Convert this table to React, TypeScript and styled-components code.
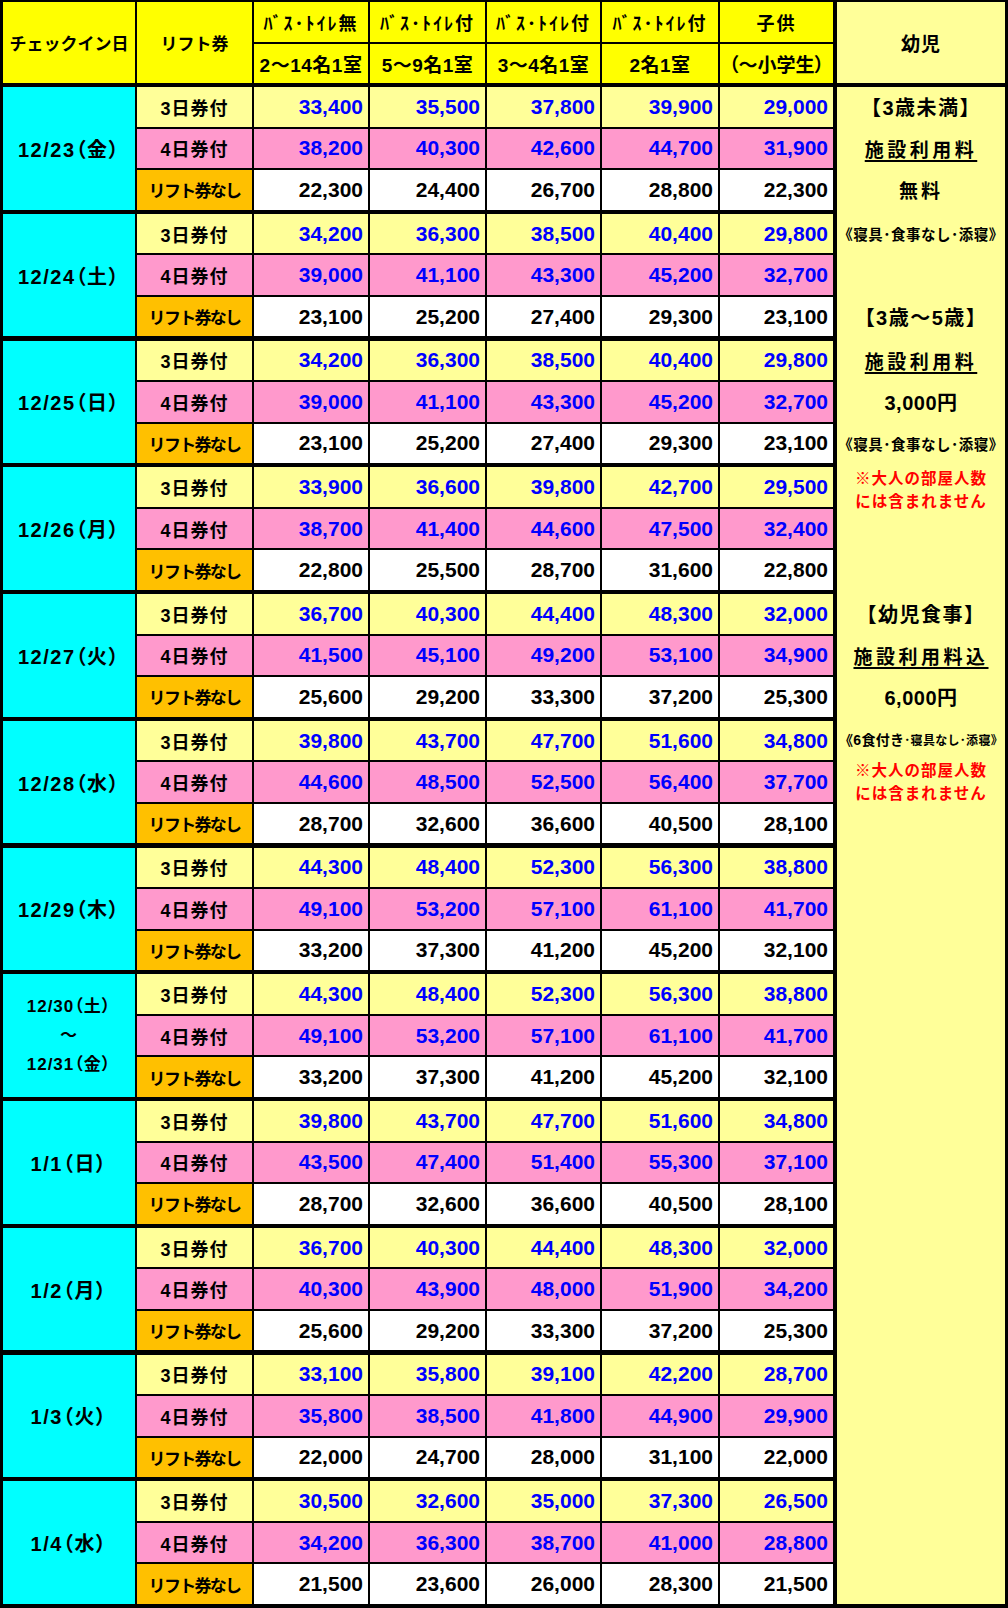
import React from "react";
import styled, { createGlobalStyle, css } from "styled-components";

const GlobalStyle = createGlobalStyle`
  html, body {
    margin: 0;
    padding: 0;
    background: #ffffff;
  }
  body {
    font-family: "Liberation Sans", "Noto Sans CJK JP", sans-serif;
  }
`;

type Kind = "three" | "four" | "none";

const COLUMNS = "132px 115px 114px 115px 113px 116px 113px";

const rowBg: Record<Kind, string> = {
  three: "#ffff99",
  four: "#ff99cc",
  none: "#ffffff",
};

const liftBg: Record<Kind, string> = {
  three: "#ffff99",
  four: "#ff99cc",
  none: "#ffc000",
};

const liftLabel: Record<Kind, string> = {
  three: "3日券付",
  four: "4日券付",
  none: "リフト券なし",
};

interface Stay {
  date: string[];
  three: string[];
  four: string[];
  none: string[];
}

const stays: Stay[] = [
  {
    date: ["12/23（金）"],
    three: ["33,400", "35,500", "37,800", "39,900", "29,000"],
    four: ["38,200", "40,300", "42,600", "44,700", "31,900"],
    none: ["22,300", "24,400", "26,700", "28,800", "22,300"],
  },
  {
    date: ["12/24（土）"],
    three: ["34,200", "36,300", "38,500", "40,400", "29,800"],
    four: ["39,000", "41,100", "43,300", "45,200", "32,700"],
    none: ["23,100", "25,200", "27,400", "29,300", "23,100"],
  },
  {
    date: ["12/25（日）"],
    three: ["34,200", "36,300", "38,500", "40,400", "29,800"],
    four: ["39,000", "41,100", "43,300", "45,200", "32,700"],
    none: ["23,100", "25,200", "27,400", "29,300", "23,100"],
  },
  {
    date: ["12/26（月）"],
    three: ["33,900", "36,600", "39,800", "42,700", "29,500"],
    four: ["38,700", "41,400", "44,600", "47,500", "32,400"],
    none: ["22,800", "25,500", "28,700", "31,600", "22,800"],
  },
  {
    date: ["12/27（火）"],
    three: ["36,700", "40,300", "44,400", "48,300", "32,000"],
    four: ["41,500", "45,100", "49,200", "53,100", "34,900"],
    none: ["25,600", "29,200", "33,300", "37,200", "25,300"],
  },
  {
    date: ["12/28（水）"],
    three: ["39,800", "43,700", "47,700", "51,600", "34,800"],
    four: ["44,600", "48,500", "52,500", "56,400", "37,700"],
    none: ["28,700", "32,600", "36,600", "40,500", "28,100"],
  },
  {
    date: ["12/29（木）"],
    three: ["44,300", "48,400", "52,300", "56,300", "38,800"],
    four: ["49,100", "53,200", "57,100", "61,100", "41,700"],
    none: ["33,200", "37,300", "41,200", "45,200", "32,100"],
  },
  {
    date: ["12/30（土）", "～", "12/31（金）"],
    three: ["44,300", "48,400", "52,300", "56,300", "38,800"],
    four: ["49,100", "53,200", "57,100", "61,100", "41,700"],
    none: ["33,200", "37,300", "41,200", "45,200", "32,100"],
  },
  {
    date: ["1/1（日）"],
    three: ["39,800", "43,700", "47,700", "51,600", "34,800"],
    four: ["43,500", "47,400", "51,400", "55,300", "37,100"],
    none: ["28,700", "32,600", "36,600", "40,500", "28,100"],
  },
  {
    date: ["1/2（月）"],
    three: ["36,700", "40,300", "44,400", "48,300", "32,000"],
    four: ["40,300", "43,900", "48,000", "51,900", "34,200"],
    none: ["25,600", "29,200", "33,300", "37,200", "25,300"],
  },
  {
    date: ["1/3（火）"],
    three: ["33,100", "35,800", "39,100", "42,200", "28,700"],
    four: ["35,800", "38,500", "41,800", "44,900", "29,900"],
    none: ["22,000", "24,700", "28,000", "31,100", "22,000"],
  },
  {
    date: ["1/4（水）"],
    three: ["30,500", "32,600", "35,000", "37,300", "26,500"],
    four: ["34,200", "36,300", "38,700", "41,000", "28,800"],
    none: ["21,500", "23,600", "26,000", "28,300", "21,500"],
  },
];

const roomTypes = [
  ["ﾊﾞｽ･ﾄｲﾚ無", "2～14名1室"],
  ["ﾊﾞｽ･ﾄｲﾚ付", "5～9名1室"],
  ["ﾊﾞｽ･ﾄｲﾚ付", "3～4名1室"],
  ["ﾊﾞｽ･ﾄｲﾚ付", "2名1室"],
  ["子供", "（～小学生）"],
];

// the black sheet background shows through the gaps as the ruled lines
const Sheet = styled.div`
  width: 1008px;
  height: 1608px;
  box-sizing: border-box;
  padding: 2px 3px 4px 3px;
  background: #000000;
  display: flex;
  gap: 4px;
  font-family: "Liberation Sans", "Noto Sans CJK JP", sans-serif;
  font-weight: 700;
  color: #000000;
  text-spacing-trim: space-all;
`;

const Main = styled.div`
  width: 830px;
  display: flex;
  flex-direction: column;
  gap: 4px;
`;

const HeaderGrid = styled.div`
  display: grid;
  grid-template-columns: ${COLUMNS};
  grid-template-rows: 40px 39px;
  gap: 2px;
`;

const HeadCell = styled.div<{ $tall?: boolean; $sub?: boolean; $palt?: boolean }>`
  background: #ffff00;
  display: flex;
  align-items: center;
  justify-content: center;
  white-space: nowrap;
  font-size: 18px;
  letter-spacing: 2px;
  ${(p) =>
    p.$tall &&
    css`
      grid-row: span 2;
      font-size: 17px;
      letter-spacing: 0;
    `}
  ${(p) =>
    p.$sub &&
    css`
      font-size: 19px;
      letter-spacing: 0.5px;
    `}
  ${(p) =>
    p.$palt &&
    css`
      font-feature-settings: "palt";
      letter-spacing: 0;
    `}
`;

const Group = styled.div`
  height: 122.75px;
  display: grid;
  grid-template-columns: ${COLUMNS};
  grid-template-rows: 1fr 1fr 1fr;
  gap: 2px;
`;

const DateCell = styled.div<{ $split?: boolean }>`
  grid-row: span 3;
  background: #00ffff;
  display: flex;
  flex-direction: column;
  align-items: center;
  justify-content: center;
  white-space: nowrap;
  font-feature-settings: "palt";
  font-size: ${(p) => (p.$split ? "17px" : "20px")};
  letter-spacing: ${(p) => (p.$split ? "1px" : "1.5px")};
  line-height: ${(p) => (p.$split ? "29px" : "normal")};
`;

const LiftCell = styled.div<{ $kind: Kind }>`
  background: ${(p) => liftBg[p.$kind]};
  display: flex;
  align-items: center;
  justify-content: center;
  white-space: nowrap;
  font-size: ${(p) => (p.$kind === "none" ? "17px" : "18px")};
  letter-spacing: ${(p) => (p.$kind === "none" ? "-1.7px" : "1px")};
`;

const PriceCell = styled.div<{ $kind: Kind }>`
  background: ${(p) => rowBg[p.$kind]};
  color: ${(p) => (p.$kind === "none" ? "#000000" : "#0000ff")};
  display: flex;
  align-items: center;
  justify-content: flex-end;
  padding-right: 5px;
  font-family: "Liberation Sans", Arial, sans-serif;
  font-size: 21px;
`;

const InfantColumn = styled.div`
  width: 168px;
  display: flex;
  flex-direction: column;
  gap: 4px;
`;

const InfantHead = styled.div`
  height: 81px;
  background: #ffff99;
  display: flex;
  align-items: center;
  justify-content: center;
  font-size: 19px;
  letter-spacing: 1px;
`;

const InfantBody = styled.div`
  flex: 1;
  background: #ffff99;
  display: flex;
  flex-direction: column;
  gap: 4px;
`;

type Variant = "label" | "under" | "plain" | "price" | "note" | "warn" | "empty";

const variantStyle: Record<Variant, ReturnType<typeof css>> = {
  label: css`
    font-size: 20px;
    letter-spacing: 1.5px;
  `,
  under: css`
    font-size: 19px;
    letter-spacing: 3.5px;
    text-decoration: underline;
    text-decoration-thickness: 1.5px;
    text-underline-offset: 3px;
  `,
  plain: css`
    font-size: 19px;
    letter-spacing: 3px;
  `,
  price: css`
    font-size: 20px;
    letter-spacing: 0.5px;
  `,
  note: css`
    font-size: 14.5px;
    letter-spacing: 0.5px;
  `,
  warn: css`
    font-size: 15.5px;
    letter-spacing: 1px;
    line-height: 23px;
    color: #ff0000;
  `,
  empty: css``,
};

const InfantGroup = styled.div`
  height: 122.75px;
  display: grid;
  grid-template-rows: 1fr 1fr 1fr;
  gap: 2px;
`;

const InfantSlot = styled.div<{ $variant: Variant }>`
  display: flex;
  flex-direction: column;
  align-items: center;
  justify-content: center;
  white-space: nowrap;
  ${(p) => variantStyle[p.$variant]}
`;

const MealNote = styled.div`
  letter-spacing: 0.3px;
`;

const Small = styled.span`
  font-size: 12px;
`;

const Mid = styled.span`
  font-size: 14px;
`;

type Slot = { variant: Variant; content?: React.ReactNode };

const warning = (
  <>
    <span>※大人の部屋人数</span>
    <span>には含まれません</span>
  </>
);

const emptyGroup: Slot[] = [{ variant: "empty" }, { variant: "empty" }, { variant: "empty" }];

const infantSlots: Slot[][] = [
  [
    { variant: "label", content: "【3歳未満】" },
    { variant: "under", content: "施設利用料" },
    { variant: "plain", content: "無料" },
  ],
  [
    { variant: "note", content: "《寝具･食事なし･添寝》" },
    { variant: "empty" },
    { variant: "label", content: "【3歳～5歳】" },
  ],
  [
    { variant: "under", content: "施設利用料" },
    { variant: "price", content: "3,000円" },
    { variant: "note", content: "《寝具･食事なし･添寝》" },
  ],
  [{ variant: "warn", content: warning }, { variant: "empty" }, { variant: "empty" }],
  [
    { variant: "label", content: "【幼児食事】" },
    { variant: "under", content: "施設利用料込" },
    { variant: "price", content: "6,000円" },
  ],
  [
    {
      variant: "empty",
      content: (
        <MealNote>
          <Mid>《6食付き</Mid>
          <Small>･寝具なし･添寝》</Small>
        </MealNote>
      ),
    },
    { variant: "warn", content: warning },
    { variant: "empty" },
  ],
];

const kinds: Kind[] = ["three", "four", "none"];

export default function App() {
  return (
    <>
      <GlobalStyle />
      <Sheet>
        <Main>
          <HeaderGrid>
            <HeadCell $tall>チェックイン日</HeadCell>
            <HeadCell $tall>リフト券</HeadCell>
            {roomTypes.map(([top], i) => (
              <HeadCell key={"t" + i}>{top}</HeadCell>
            ))}
            {roomTypes.map(([, sub], i) => (
              <HeadCell key={"s" + i} $sub $palt={i === 4}>
                {sub}
              </HeadCell>
            ))}
          </HeaderGrid>
          {stays.map((stay, g) => (
            <Group key={g}>
              <DateCell $split={stay.date.length > 1}>
                {stay.date.map((line) => (
                  <span key={line}>{line}</span>
                ))}
              </DateCell>
              {kinds.map((kind) => (
                <React.Fragment key={kind}>
                  <LiftCell $kind={kind}>{liftLabel[kind]}</LiftCell>
                  {stay[kind].map((price, i) => (
                    <PriceCell key={i} $kind={kind}>
                      {price}
                    </PriceCell>
                  ))}
                </React.Fragment>
              ))}
            </Group>
          ))}
        </Main>
        <InfantColumn>
          <InfantHead>幼児</InfantHead>
          <InfantBody>
            {stays.map((_, g) => (
              <InfantGroup key={g}>
                {(infantSlots[g] ?? emptyGroup).map((slot, r) => (
                  <InfantSlot key={r} $variant={slot.variant}>
                    {slot.content}
                  </InfantSlot>
                ))}
              </InfantGroup>
            ))}
          </InfantBody>
        </InfantColumn>
      </Sheet>
    </>
  );
}
